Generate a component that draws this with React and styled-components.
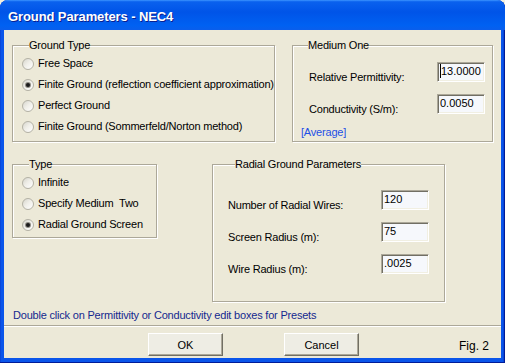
import React from 'react';
import styled, { createGlobalStyle } from 'styled-components';

const Global = createGlobalStyle`
  html, body { margin: 0; padding: 0; background: #F3F0DE; }
  body { width: 505px; height: 363px; overflow: hidden; font-family: "Liberation Sans", Arial, sans-serif; }
`;

const Window = styled.div`
  width: 505px;
  height: 363px;
  box-sizing: border-box;
  display: flex;
  flex-direction: column;
  background: #0A55EA;
  border-radius: 8px 8px 0 0;
  padding: 0 4px 5px 4px;
  box-shadow: inset -1px -1px #001C98, inset 1px 0 #0A47DA, inset -2px 0 #0846D8;
`;

const TitleBar = styled.div`
  height: 30px;
  margin: 0 -4px;
  padding: 3px 8px 0 8px;
  box-sizing: border-box;
  display: flex;
  align-items: center;
  border-radius: 8px 8px 0 0;
  background: linear-gradient(180deg, #3D95FF 0, #0A61EE 6%, #0054E8 40%, #0061F2 85%, #0A5EEC 100%);
`;

const Title = styled.span`
  color: #fff;
  font-weight: bold;
  font-size: 13px;
  letter-spacing: -0.1px;
  text-shadow: 1px 1px #0A2090;
`;

const Client = styled.div`
  flex: 1;
  background: #ECE9D8;
  display: flex;
  flex-direction: column;
  padding-top: 9px;
  font-size: 11px;
  letter-spacing: -0.2px;
  color: #000;
  overflow: hidden;
`;

const Row = styled.div`
  display: flex;
  align-items: ${p => p.$align || 'stretch'};
  gap: ${p => p.$gap}px;
  padding-left: 8px;
  margin-top: ${p => p.$top || 0}px;
`;

const Group = styled.fieldset`
  margin: 0;
  min-width: 0;
  box-sizing: border-box;
  width: ${p => p.$w}px;
  border: 1px solid #ACA899;
  box-shadow: inset 1px 1px #fff, 1px 1px #fff;
  padding: ${p => p.$pad};
  display: flex;
  flex-direction: column;
`;

const Legend = styled.legend`
  padding: 0;
  margin-left: 7px;
  line-height: 13px;
  background: #ECE9D8;
`;

const RadioRow = styled.label`
  display: flex;
  align-items: center;
  height: 21px;
  gap: 4px;
  line-height: 13px;
`;

const RadioCircle = styled.span`
  width: 12px;
  height: 12px;
  flex: none;
  box-sizing: border-box;
  border-radius: 50%;
  border: 1px solid #B3B1A5;
  background: linear-gradient(135deg, #D6D5CC 0%, #EFEEE8 45%, #FFFFFF 100%);
  display: flex;
  align-items: center;
  justify-content: center;
  &::after {
    content: '';
    width: 4px;
    height: 4px;
    border-radius: 50%;
    background: ${p => (p.$checked ? '#1A1A1A' : 'transparent')};
    box-shadow: ${p => (p.$checked ? '0 0 0 1px #8E8C84' : 'none')};
  }
`;

const FieldGrid = styled.div`
  display: grid;
  grid-template-columns: 1fr 48px;
  row-gap: 12px;
  align-items: end;
  padding-left: ${p => p.$indent || 0}px;
`;

const FieldLabel = styled.span`
  line-height: 13px;
  margin-bottom: -2px;
  white-space: nowrap;
`;

const EditBox = styled.div`
  width: 48px;
  height: 20px;
  box-sizing: border-box;
  background: #F6F8FC;
  border: 1px solid;
  border-color: #ACA899 #FFFFFF #FFFFFF #ACA899;
  box-shadow: inset 1px 1px #716F64, inset -1px -1px #F1EFE2;
  padding: 1.5px 0 0 2px;
  line-height: 13px;
  letter-spacing: 0;
  white-space: nowrap;
  overflow: hidden;
`;

const Caret = styled.span`
  display: inline-block;
  width: 1px;
  height: 14px;
  background: #000;
  vertical-align: top;
  margin-top: -0.5px;
`;

const LinkText = styled.span`
  color: #1E50E6;
  line-height: 13px;
  margin-top: 12px;
`;

const Note = styled.div`
  color: #14288F;
  line-height: 13px;
  padding-left: 9px;
  margin-top: 7px;
`;

const Separator = styled.div`
  height: 1px;
  margin-top: 3px;
  background: #ACA899;
  border-bottom: 1px solid #FFFFFF;
`;

const ButtonRow = styled.div`
  display: flex;
  align-items: center;
  gap: 61px;
  padding: 0 12px 0 144px;
  margin-top: 6px;
`;

const Button = styled.button`
  width: 75px;
  height: 23px;
  box-sizing: border-box;
  padding: 0;
  font: inherit;
  letter-spacing: 0;
  color: #000;
  background: #EEEDE4;
  border: 1px solid;
  border-color: #FFFFFF #716F64 #716F64 #FFFFFF;
  box-shadow: inset -1px -1px #ACA899;
  border-radius: 0;
`;

const Fig = styled.span`
  margin-left: auto;
  font-size: 12px;
  letter-spacing: 0;
  padding-top: 3px;
`;

const Radio = ({ checked, children }) => (
  <RadioRow>
    <RadioCircle $checked={checked} />
    <span style={{ whiteSpace: 'pre' }}>{children}</span>
  </RadioRow>
);

export default function App() {
  return (
    <>
      <Global />
      <Window>
        <TitleBar>
          <Title>Ground Parameters - NEC4</Title>
        </TitleBar>
        <Client>
          <Row $gap={17}>
            <Group $w={263} $pad="1px 8px 4px 9px">
              <Legend>Ground Type</Legend>
              <Radio>Free Space</Radio>
              <Radio checked>Finite Ground (reflection coefficient approximation)</Radio>
              <Radio>Perfect Ground</Radio>
              <Radio>Finite Ground (Sommerfeld/Norton method)</Radio>
            </Group>
            <Group $w={201} $pad="10px 7px 2px 8px">
              <Legend>Medium One</Legend>
              <FieldGrid $indent={8}>
                <FieldLabel>Relative Permittivity:</FieldLabel>
                <EditBox><Caret />13.0000</EditBox>
                <FieldLabel>Conductivity (S/m):</FieldLabel>
                <EditBox>0.0050</EditBox>
              </FieldGrid>
              <LinkText>[Average]</LinkText>
            </Group>
          </Row>
          <Row $gap={55} $align="flex-start" $top={16}>
            <Group $w={145} $pad="1px 8px 2px 9px">
              <Legend>Type</Legend>
              <Radio>Infinite</Radio>
              <Radio>Specify Medium  Two</Radio>
              <Radio checked>Radial Ground Screen</Radio>
            </Group>
            <Group $w={233} $pad="19px 15px 27px 15px">
              <Legend>Radial Ground Parameters</Legend>
              <FieldGrid>
                <FieldLabel>Number of Radial Wires:</FieldLabel>
                <EditBox>120</EditBox>
                <FieldLabel>Screen Radius (m):</FieldLabel>
                <EditBox>75</EditBox>
                <FieldLabel>Wire Radius (m):</FieldLabel>
                <EditBox>.0025</EditBox>
              </FieldGrid>
            </Group>
          </Row>
          <Note>Double click on Permittivity or Conductivity edit boxes for Presets</Note>
          <Separator />
          <ButtonRow>
            <Button>OK</Button>
            <Button>Cancel</Button>
            <Fig>Fig. 2</Fig>
          </ButtonRow>
        </Client>
      </Window>
    </>
  );
}
